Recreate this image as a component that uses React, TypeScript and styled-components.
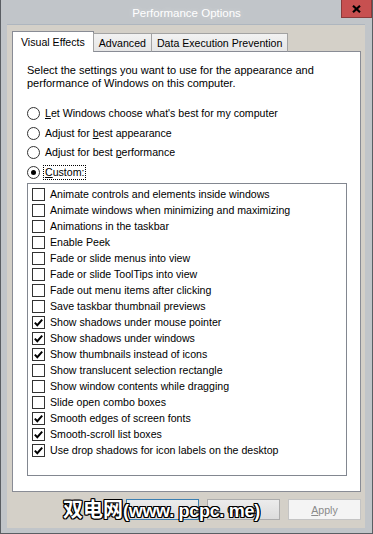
import React from 'react';
import styled, { createGlobalStyle } from 'styled-components';

const GlobalStyle = createGlobalStyle`
  html, body { margin: 0; padding: 0; background: #c1c5c9; }
  body {
    width: 373px; height: 534px; overflow: hidden;
    font-family: "Liberation Sans", Arial, sans-serif;
    font-size: 10.6px; color: #000;
  }
  * { box-sizing: border-box; }
`;

const Window = styled.div`
  position: relative;
  width: 373px;
  height: 534px;
  background: #c1c5c9;
  border: 1px solid #5a5e63;
  border-top: none;
  padding: 0 7px 5px 6px;
  display: flex;
  flex-direction: column;
`;

const TitleBar = styled.div`
  height: 24px;
  margin: 0 -7px 0 -6px;
  display: grid;
  grid-template-columns: 1fr auto 1fr;
  align-items: start;
`;

const Title = styled.div`
  grid-column: 2;
  color: #fff;
  font-size: 11.5px;
  line-height: 14px;
  padding-top: 6px;
  text-shadow: 0 0 6px rgba(255, 255, 255, 0.4);
`;

const CloseButton = styled.div`
  grid-column: 3;
  justify-self: end;
  width: 31px;
  height: 18px;
  background: #c75050;
  border: 1px solid #8a3a3a;
  border-top: none;
  display: flex;
  align-items: center;
  justify-content: center;
`;

const Client = styled.div`
  flex: 1;
  background: #d4d0c8;
  border-top: 1px solid #aeb6bf;
  padding: 7px 4px 8px 5px;
  display: flex;
  flex-direction: column;
`;

const TabRow = styled.div`
  display: flex;
  align-items: flex-end;
  height: 20px;
  position: relative;
  z-index: 1;
  margin-bottom: -1px;
`;

const Tab = styled.div<{ $active?: boolean }>`
  height: ${(p) => (p.$active ? '21px' : '19px')};
  padding: ${(p) => (p.$active ? '3px 8px 0 8px' : '2px 5px 0 5px')};
  line-height: 14px;
  background: ${(p) => (p.$active ? '#fff' : 'linear-gradient(#f2f2f2, #e6e6e6)')};
  border: 1px solid ${(p) => (p.$active ? '#898c95' : '#a3a3a3')};
  border-bottom: ${(p) => (p.$active ? 'none' : '1px solid #898c95')};
  margin-left: ${(p) => (p.$active ? '0' : '-1px')};
  white-space: nowrap;
  &:first-child { margin-left: 0; }
`;

const Panel = styled.div`
  flex: 1;
  background: #fff;
  border: 1px solid #898c95;
  padding: 12px 13px 0 14px;
  display: flex;
  flex-direction: column;
`;

const Intro = styled.p`
  margin: 0;
  font-size: 11px;
  line-height: 13px;
`;

const RadioGroup = styled.div`
  display: flex;
  flex-direction: column;
  margin-top: 14px;
`;

const RadioRow = styled.div`
  height: 19.5px;
  display: flex;
  align-items: center;
  gap: 4px;
`;

const RadioCircle = styled.span<{ $checked?: boolean }>`
  width: 13px;
  height: 13px;
  border-radius: 50%;
  border: 1px solid #333;
  background: #fff;
  display: flex;
  align-items: center;
  justify-content: center;
  flex: none;
  &::after {
    content: '';
    display: ${(p) => (p.$checked ? 'block' : 'none')};
    width: 5px;
    height: 5px;
    border-radius: 50%;
    background: #000;
  }
`;

const RadioLabel = styled.span<{ $focused?: boolean }>`
  line-height: 13px;
  padding: 0 1px;
  border: 1px dotted ${(p) => (p.$focused ? '#000' : 'transparent')};
  margin-left: -1px;
`;

const ListBox = styled.div`
  margin-top: 1px;
  width: 320px;
  height: 293px;
  border: 1px solid #828790;
  background: #fff;
  padding: 2px 0 0 4px;
  display: flex;
  flex-direction: column;
`;

const CheckRow = styled.div`
  height: 16px;
  display: flex;
  align-items: center;
  gap: 5px;
  white-space: nowrap;
`;

const CheckBox = styled.span`
  width: 13px;
  height: 13px;
  border: 1px solid #333;
  background: #fff;
  flex: none;
  display: flex;
  align-items: center;
  justify-content: center;
`;

const ButtonRow = styled.div`
  margin-top: 7px;
  height: 21px;
  display: flex;
  justify-content: flex-end;
  gap: 8px;
`;

const Button = styled.div<{ $variant?: 'default' | 'normal' | 'disabled' }>`
  width: 73px;
  height: 21px;
  display: flex;
  align-items: center;
  justify-content: center;
  border: 1px solid
    ${(p) => (p.$variant === 'default' ? '#3c7fb1' : p.$variant === 'disabled' ? '#c4c4c4' : '#acacac')};
  background: ${(p) => (p.$variant === 'disabled' ? '#f4f4f4' : 'linear-gradient(#ececec, #dcdcdc)')};
  color: ${(p) => (p.$variant === 'disabled' ? '#8a8a8a' : '#000')};
`;

const Watermark = styled.div`
  position: absolute;
  left: 62px;
  top: 497px;
  font-family: "Noto Sans CJK SC", "Noto Sans", sans-serif;
  font-size: 20px;
  font-weight: 700;
  line-height: 24px;
  color: #fff;
  white-space: nowrap;
  text-shadow:
    1px 0 0 #000, -1px 0 0 #000, 0 1px 0 #000, 0 -1px 0 #000,
    1px 1px 0 #000, -1px -1px 0 #000, 1px -1px 0 #000, -1px 1px 0 #000;
`;

const WatermarkLatin = styled.span`
  font-family: "Liberation Sans", Arial, sans-serif;
  font-size: 18px;
  letter-spacing: -0.3px;
`;

const Check = () => (
  <svg width="11" height="11" viewBox="0 0 11 11">
    <polyline points="1.8,5.6 4.3,8.2 9.2,2.6" fill="none" stroke="#000" strokeWidth="2" />
  </svg>
);

const CloseX = () => (
  <svg width="9" height="8" viewBox="0 0 9 8">
    <path d="M1 0.8 L8 7.2 M8 0.8 L1 7.2" stroke="#000" strokeWidth="2.2" />
  </svg>
);

const items: [string, boolean][] = [
  ['Animate controls and elements inside windows', false],
  ['Animate windows when minimizing and maximizing', false],
  ['Animations in the taskbar', false],
  ['Enable Peek', false],
  ['Fade or slide menus into view', false],
  ['Fade or slide ToolTips into view', false],
  ['Fade out menu items after clicking', false],
  ['Save taskbar thumbnail previews', false],
  ['Show shadows under mouse pointer', true],
  ['Show shadows under windows', true],
  ['Show thumbnails instead of icons', true],
  ['Show translucent selection rectangle', false],
  ['Show window contents while dragging', false],
  ['Slide open combo boxes', false],
  ['Smooth edges of screen fonts', true],
  ['Smooth-scroll list boxes', true],
  ['Use drop shadows for icon labels on the desktop', true],
];

export default function App() {
  return (
    <>
      <GlobalStyle />
      <Window>
        <TitleBar>
          <Title>Performance Options</Title>
          <CloseButton>
            <CloseX />
          </CloseButton>
        </TitleBar>
        <Client>
          <TabRow>
            <Tab $active>Visual Effects</Tab>
            <Tab>Advanced</Tab>
            <Tab>Data Execution Prevention</Tab>
          </TabRow>
          <Panel>
            <Intro>
              Select the settings you want to use for the appearance and
              <br />
              performance of Windows on this computer.
            </Intro>
            <RadioGroup>
              <RadioRow>
                <RadioCircle />
                <RadioLabel>
                  <u>L</u>et Windows choose what's best for my computer
                </RadioLabel>
              </RadioRow>
              <RadioRow>
                <RadioCircle />
                <RadioLabel>
                  Adjust for <u>b</u>est appearance
                </RadioLabel>
              </RadioRow>
              <RadioRow>
                <RadioCircle />
                <RadioLabel>
                  Adjust for best <u>p</u>erformance
                </RadioLabel>
              </RadioRow>
              <RadioRow>
                <RadioCircle $checked />
                <RadioLabel $focused>
                  <u>C</u>ustom:
                </RadioLabel>
              </RadioRow>
            </RadioGroup>
            <ListBox>
              {items.map(([label, checked]) => (
                <CheckRow key={label}>
                  <CheckBox>{checked && <Check />}</CheckBox>
                  <span>{label}</span>
                </CheckRow>
              ))}
            </ListBox>
          </Panel>
          <ButtonRow>
            <Button $variant="default">OK</Button>
            <Button>Cancel</Button>
            <Button $variant="disabled">
              <span>
                <u>A</u>pply
              </span>
            </Button>
          </ButtonRow>
        </Client>
        <Watermark>
          双电网<WatermarkLatin>(www. pcpc. me)</WatermarkLatin>
        </Watermark>
      </Window>
    </>
  );
}
